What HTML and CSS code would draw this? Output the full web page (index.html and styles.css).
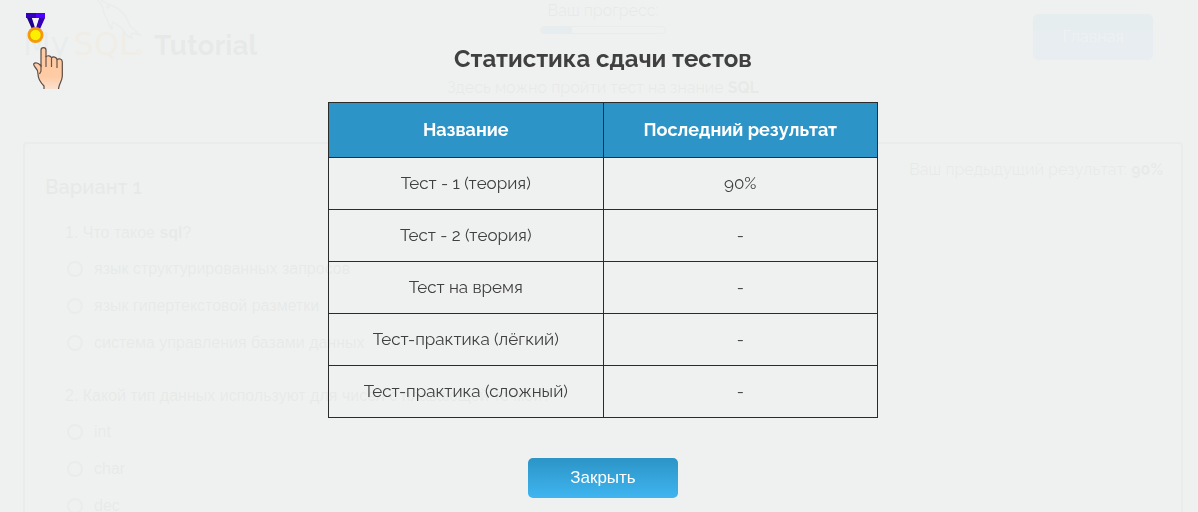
FILE: index.html
```html
<!DOCTYPE html>
<html lang="ru">
<head>
<meta charset="utf-8">
<title>MySQL Tutorial</title>
<link rel="stylesheet" href="styles.css">
</head>
<body>
<div class="page">
  <header class="header">
    <div class="logo">
      <span class="brand"><span class="brand-my">My</span><span class="brand-sql">SQL</span><svg class="dolphin" viewBox="0 0 46 60" aria-hidden="true"><path d="M1 0C3 3 5 5 6 8C6 13 8 16 10 19C12 23 11 27 15 29C15 26 14 24 16 22C19 24 21 26 25 28C27 33 30 37 35 38C33 35 34 34 36 33L43 35C39 31 35 28 33 26C30 17 25 10 18 7C13 5 8 3 4 0"/><circle cx="11" cy="7" r="1"/><circle class="mark" cx="42" cy="52" r="2"/></svg></span>
      <span class="logo-title">Tutorial</span>
    </div>
    <div class="progress">
      <div class="progress-label">Ваш прогресс:</div>
      <div class="bar"><div class="bar-fill"></div></div>
    </div>
    <a class="home" href="#">Главная</a>
  </header>
  <p class="intro">Здесь можно пройти тест на знание <b>SQL</b></p>
  <main class="card">
    <div class="card-head">
      <h2 class="variant">Вариант 1</h2>
      <div class="previous">Ваш предыдущий результат: <b>90%</b></div>
    </div>
    <fieldset class="question">
      <legend>1. Что такое <b>sql</b>?</legend>
      <label><input type="radio" name="q1">язык структурированных запросов</label>
      <label><input type="radio" name="q1">язык гипертекстовой разметки</label>
      <label><input type="radio" name="q1">система управления базами данных</label>
    </fieldset>
    <fieldset class="question">
      <legend>2. Какой тип данных используют для чисел с плавающей точкой?</legend>
      <label><input type="radio" name="q2">int</label>
      <label><input type="radio" name="q2">char</label>
      <label><input type="radio" name="q2">dec</label>
    </fieldset>
  </main>
</div>

<div class="overlay" role="dialog" aria-labelledby="stats-title">
  <h1 class="title" id="stats-title">Статистика сдачи тестов</h1>
  <table class="stats">
    <thead><tr><th>Название</th><th>Последний результат</th></tr></thead>
    <tbody>
      <tr><td>Тест - 1 (теория)</td><td>90%</td></tr>
      <tr><td>Тест - 2 (теория)</td><td>-</td></tr>
      <tr><td>Тест на время</td><td>-</td></tr>
      <tr><td>Тест-практика (лёгкий)</td><td>-</td></tr>
      <tr><td>Тест-практика (сложный)</td><td>-</td></tr>
    </tbody>
  </table>
  <button class="close" type="button">Закрыть</button>
</div>

<div class="hint">
  <svg class="medal" viewBox="0 0 20 30" aria-hidden="true">
    <path d="M1 5H6L11 16H6Z" fill="#20008a"/>
    <path d="M13 5H19L14 16H9Z" fill="#3500b8"/>
    <path d="M6 5H13L10 15H9Z" fill="#f4f4f8"/>
    <path d="M0 0H10V5H0Z" fill="#3500bb"/><path d="M10 0H19V5H10Z" fill="#4d00ff"/>
    <circle cx="9.500" cy="22" r="8" fill="#f79a0c"/>
    <circle cx="9.500" cy="22" r="5.600" fill="#fcf000" stroke="#e08a00" stroke-width=".6"/>
  </svg>
  <svg class="hand" viewBox="0 0 30 42" aria-hidden="true">
    <defs><linearGradient id="skin" x1="0" y1="0" x2="0" y2="1"><stop offset=".7" stop-color="#ffcba4"/><stop offset="1" stop-color="#fbe0cf"/></linearGradient></defs>
    <path d="M11 42V39C7 35 5 31 5 27C5 24 4 22 2 20C-.5 17 1 15.500 4 16C6 16.500 7 18 8 19V3C8 -.2 13 -.2 13 3V10C14 8 18 8.500 18.500 11C20 9 23.500 10 24 12.500C26 11 29.300 12 29.300 15V29C29.300 34 26 36 25.500 42" fill="url(#skin)" stroke="#5a4d45" stroke-width="1.200"/>
    <path d="M13 9V20M18.500 11V20M24 12.500V21M8 18V24L6.500 27" fill="none" stroke="#6b5546" stroke-width="1.200"/>
  </svg>
</div>
</body>
</html>
```
FILE: styles.css
```css
* { box-sizing: border-box; }

body {
  margin: 0;
  height: 100vh;
  overflow: hidden;
  background: #eef0ef;
  color: #404040;
  font: 16px/20px Raleway, Lato, sans-serif;
}

.page {
  height: 100vh;
  overflow: hidden;
  padding: 0 15px 0 23px;
}

.header {
  display: grid;
  grid-template-columns: 1fr auto 1fr;
  height: 76px;
}

.logo { display: flex; gap: 10px; padding-top: 26px; }
.brand { position: relative; width: 121px; font: 32px/36px "DejaVu Sans", sans-serif; }
.brand-my { color: #5d87a1; }
.brand-sql { padding-left: 4px; color: #f29111; }
.dolphin {
  position: absolute;
  left: 74px;
  top: -26px;
  width: 46px;
  height: 60px;
  fill: none;
  stroke: #5d87a1;
  stroke-width: 1.5;
}
.mark { stroke: #f29111; }
.logo-title { font-weight: 700; font-size: 28px; line-height: 40px; }

.progress { text-align: center; }
.progress-label { line-height: 22px; }
.bar {
  width: 126px;
  height: 8px;
  margin: 4px auto 0;
  border: 1px solid #777;
  border-radius: 4px;
  overflow: hidden;
}
.bar-fill { width: 25%; height: 100%; background: #268cf0; }

.home {
  justify-self: end;
  width: 120px;
  height: 46px;
  margin: 14px 30px 0 0;
  border-radius: 5px;
  background: linear-gradient(#268cdc, #3fa0ff);
  color: #fff;
  line-height: 46px;
  text-align: center;
  text-decoration: none;
}

.intro { margin: 0; line-height: 24px; text-align: center; }

.card {
  margin-top: 42px;
  padding: 16px 18px 20px 20px;
  border: 2px solid #777;
  border-radius: 4px;
}
.card-head { display: flex; justify-content: space-between; }
.variant { margin: 15px 0 0; font-size: 20px; line-height: 24px; font-weight: 600; }

.question {
  margin: 0 0 16px;
  padding: 24px 20px 0;
  border: 0;
  font: 16px/20px "Liberation Sans", sans-serif;
}
.question + .question { padding-top: 9px; }
.question legend { float: left; width: 100%; margin-bottom: 7px; padding: 0; }
.question label { display: flex; clear: both; align-items: center; height: 37px; gap: 11px; }
.question input {
  appearance: none;
  width: 16px;
  height: 16px;
  margin: 0 0 0 2px;
  border: 2px solid #888;
  border-radius: 50%;
}

.overlay {
  position: fixed;
  inset: 0;
  display: flex;
  flex-direction: column;
  align-items: center;
  padding: 44px 0 14px 8px;
  background: rgba(238, 240, 239, .96);
}
.title { margin: 0 0 28px; font-size: 24px; line-height: 30px; font-weight: 700; }

.stats {
  width: 550px;
  max-width: 100%;
  table-layout: fixed;
  border-collapse: collapse;
  text-align: center;
}
.stats th, .stats td { padding: 0 10px; border: 1px solid #2b2b2b; }
.stats th { height: 55px; background: #2c94c6; color: #fff; font-size: 18px; font-weight: 700; }
.stats td { height: 52px; padding-bottom: 2px; font-size: 17px; }

.close {
  width: 150px;
  height: 40px;
  margin-top: 40px;
  border: 0;
  border-radius: 5px;
  background: linear-gradient(#2c94c6, #3fb5f0);
  color: #fff;
  font: 17px/20px "Liberation Sans", sans-serif;
}

.hint { position: fixed; left: 26px; top: 13px; display: grid; }
.medal { width: 20px; height: 30px; }
.hand { width: 30px; height: 42px; margin: 4px 0 0 7px; }
```
